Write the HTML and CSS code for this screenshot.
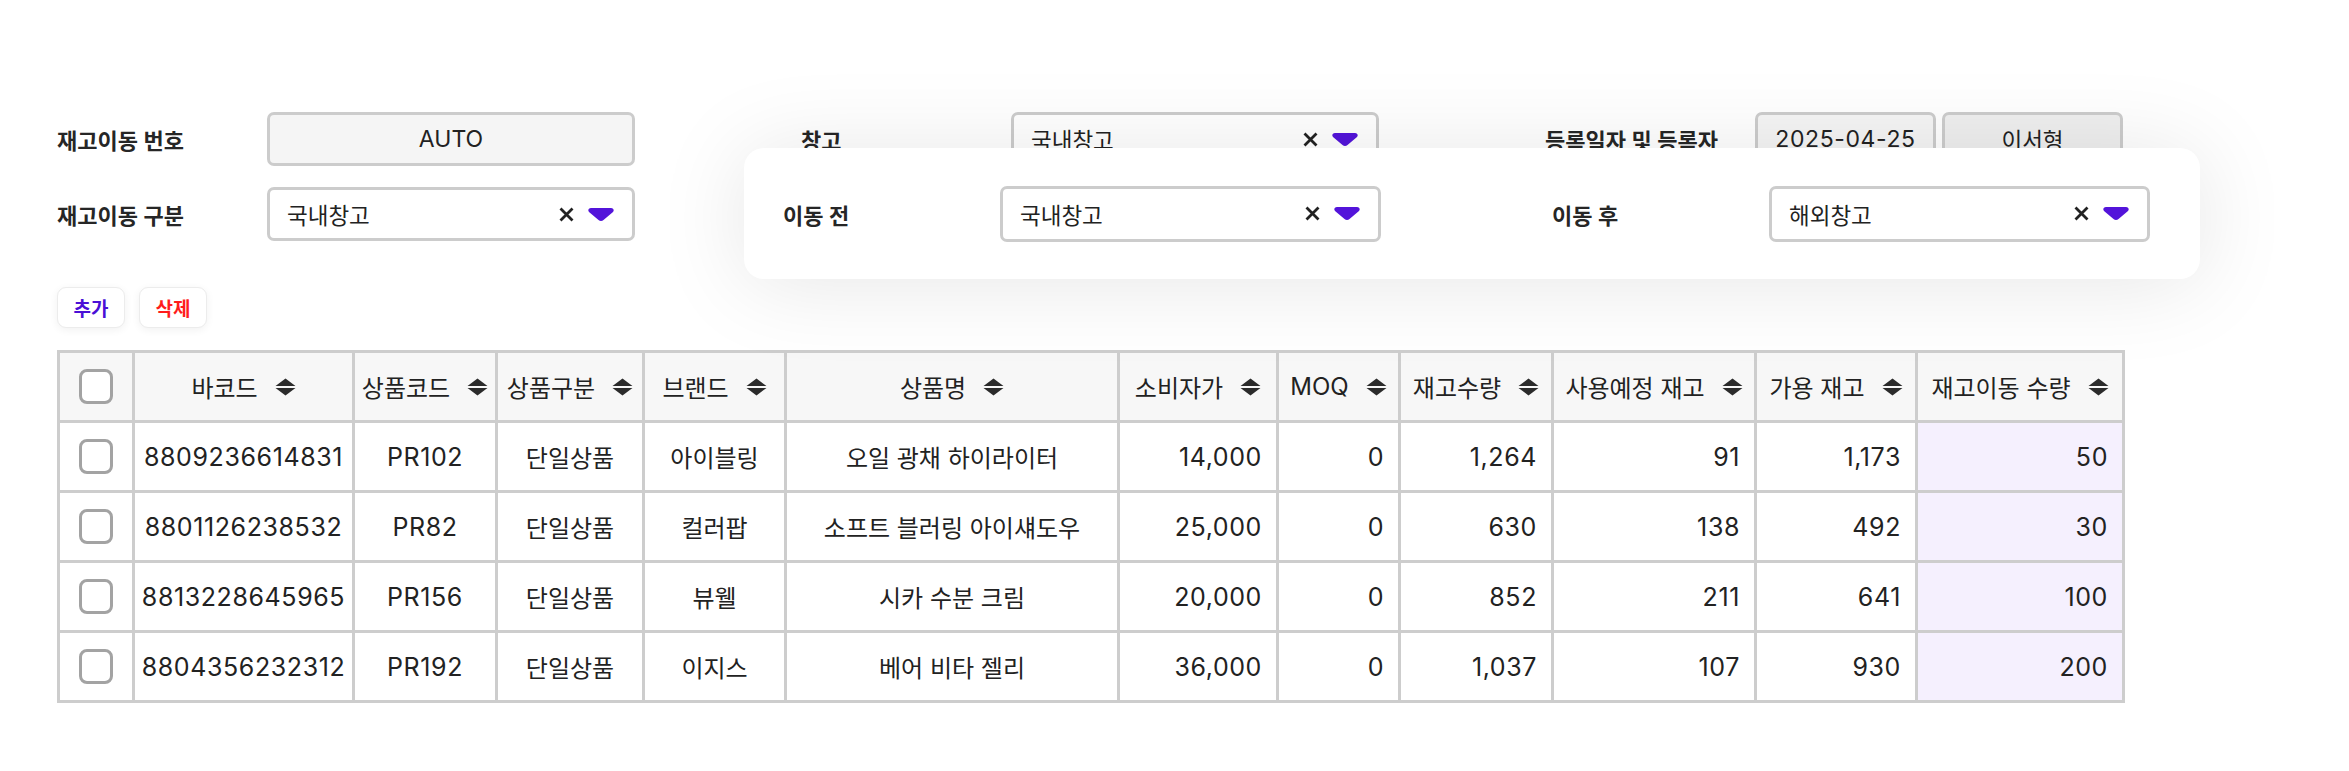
FILE: index.html
```html
<!DOCTYPE html>
<html lang="ko">
<head>
<meta charset="utf-8">
<title>재고이동 등록</title>
<link rel="stylesheet" href="styles.css">
</head>
<body>
<div class="page">
  <section class="form">
    <div class="field">
      <span class="label">재고이동 번호</span>
      <div class="box readonly lat">AUTO</div>
    </div>
    <div class="field">
      <span class="label">창고</span>
      <div class="select">
        <span class="select-value">국내창고</span>
        <svg class="ico-x" viewBox="0 0 15 15"><path d="M1.5 1.5L13.5 13.5M13.5 1.5L1.5 13.5"/></svg>
        <svg class="ico-caret" viewBox="0 0 26 13"><path d="M3 0H23C25.5 0 26.5 2.5 25 4L15.5 12C14 13.3 12 13.3 10.5 12L1 4C-0.5 2.5 0.5 0 3 0Z"/></svg>
      </div>
    </div>
    <div class="field">
      <span class="label">등록일자 및 등록자</span>
      <div class="pair">
        <div class="box readonly lat num">2025-04-25</div>
        <div class="box readonly dim">이서형</div>
      </div>
    </div>
    <div class="field">
      <span class="label">재고이동 구분</span>
      <div class="select">
        <span class="select-value">국내창고</span>
        <svg class="ico-x" viewBox="0 0 15 15"><path d="M1.5 1.5L13.5 13.5M13.5 1.5L1.5 13.5"/></svg>
        <svg class="ico-caret" viewBox="0 0 26 13"><path d="M3 0H23C25.5 0 26.5 2.5 25 4L15.5 12C14 13.3 12 13.3 10.5 12L1 4C-0.5 2.5 0.5 0 3 0Z"/></svg>
      </div>
    </div>
  </section>

  <div class="popover">
    <div class="pfield">
      <span class="label">이동 전</span>
      <div class="select tall">
        <span class="select-value">국내창고</span>
        <svg class="ico-x" viewBox="0 0 15 15"><path d="M1.5 1.5L13.5 13.5M13.5 1.5L1.5 13.5"/></svg>
        <svg class="ico-caret" viewBox="0 0 26 13"><path d="M3 0H23C25.5 0 26.5 2.5 25 4L15.5 12C14 13.3 12 13.3 10.5 12L1 4C-0.5 2.5 0.5 0 3 0Z"/></svg>
      </div>
    </div>
    <div class="pfield">
      <span class="label">이동 후</span>
      <div class="select tall">
        <span class="select-value">해외창고</span>
        <svg class="ico-x" viewBox="0 0 15 15"><path d="M1.5 1.5L13.5 13.5M13.5 1.5L1.5 13.5"/></svg>
        <svg class="ico-caret" viewBox="0 0 26 13"><path d="M3 0H23C25.5 0 26.5 2.5 25 4L15.5 12C14 13.3 12 13.3 10.5 12L1 4C-0.5 2.5 0.5 0 3 0Z"/></svg>
      </div>
    </div>
  </div>

  <div class="actions">
    <button class="btn btn-add">추가</button>
    <button class="btn btn-del">삭제</button>
  </div>

  <table class="grid">
    <colgroup>
      <col style="width:75px"><col style="width:220px"><col style="width:143px"><col style="width:147px">
      <col style="width:142px"><col style="width:333px"><col style="width:159px"><col style="width:122px">
      <col style="width:153px"><col style="width:203px"><col style="width:161px"><col style="width:207px">
    </colgroup>
    <thead>
      <tr>
        <th><span class="chk"></span></th>
        <th><span class="th-in">바코드<svg class="sort" viewBox="0 0 20 17"><path d="M10 0.5L19.5 7.5H0.5Z M0.5 9.5H19.5L10 16.5Z"/></svg></span></th>
        <th><span class="th-in">상품코드<svg class="sort" viewBox="0 0 20 17"><path d="M10 0.5L19.5 7.5H0.5Z M0.5 9.5H19.5L10 16.5Z"/></svg></span></th>
        <th><span class="th-in">상품구분<svg class="sort" viewBox="0 0 20 17"><path d="M10 0.5L19.5 7.5H0.5Z M0.5 9.5H19.5L10 16.5Z"/></svg></span></th>
        <th><span class="th-in">브랜드<svg class="sort" viewBox="0 0 20 17"><path d="M10 0.5L19.5 7.5H0.5Z M0.5 9.5H19.5L10 16.5Z"/></svg></span></th>
        <th><span class="th-in">상품명<svg class="sort" viewBox="0 0 20 17"><path d="M10 0.5L19.5 7.5H0.5Z M0.5 9.5H19.5L10 16.5Z"/></svg></span></th>
        <th><span class="th-in">소비자가<svg class="sort" viewBox="0 0 20 17"><path d="M10 0.5L19.5 7.5H0.5Z M0.5 9.5H19.5L10 16.5Z"/></svg></span></th>
        <th><span class="th-in"><span class="th-lat">MOQ</span><svg class="sort" viewBox="0 0 20 17"><path d="M10 0.5L19.5 7.5H0.5Z M0.5 9.5H19.5L10 16.5Z"/></svg></span></th>
        <th><span class="th-in">재고수량<svg class="sort" viewBox="0 0 20 17"><path d="M10 0.5L19.5 7.5H0.5Z M0.5 9.5H19.5L10 16.5Z"/></svg></span></th>
        <th><span class="th-in">사용예정 재고<svg class="sort" viewBox="0 0 20 17"><path d="M10 0.5L19.5 7.5H0.5Z M0.5 9.5H19.5L10 16.5Z"/></svg></span></th>
        <th><span class="th-in">가용 재고<svg class="sort" viewBox="0 0 20 17"><path d="M10 0.5L19.5 7.5H0.5Z M0.5 9.5H19.5L10 16.5Z"/></svg></span></th>
        <th><span class="th-in">재고이동 수량<svg class="sort" viewBox="0 0 20 17"><path d="M10 0.5L19.5 7.5H0.5Z M0.5 9.5H19.5L10 16.5Z"/></svg></span></th>
      </tr>
    </thead>
    <tbody>
      <tr>
        <td><span class="chk"></span></td>
        <td class="c">8809236614831</td><td class="c">PR102</td><td class="c kr">단일상품</td><td class="c kr">아이블링</td>
        <td class="c kr">오일 광채 하이라이터</td><td class="r">14,000</td><td class="r">0</td><td class="r">1,264</td>
        <td class="r">91</td><td class="r">1,173</td><td class="r qty">50</td>
      </tr>
      <tr>
        <td><span class="chk"></span></td>
        <td class="c">8801126238532</td><td class="c">PR82</td><td class="c kr">단일상품</td><td class="c kr">컬러팝</td>
        <td class="c kr">소프트 블러링 아이섀도우</td><td class="r">25,000</td><td class="r">0</td><td class="r">630</td>
        <td class="r">138</td><td class="r">492</td><td class="r qty">30</td>
      </tr>
      <tr>
        <td><span class="chk"></span></td>
        <td class="c">8813228645965</td><td class="c">PR156</td><td class="c kr">단일상품</td><td class="c kr">뷰웰</td>
        <td class="c kr">시카 수분 크림</td><td class="r">20,000</td><td class="r">0</td><td class="r">852</td>
        <td class="r">211</td><td class="r">641</td><td class="r qty">100</td>
      </tr>
      <tr>
        <td><span class="chk"></span></td>
        <td class="c">8804356232312</td><td class="c">PR192</td><td class="c kr">단일상품</td><td class="c kr">이지스</td>
        <td class="c kr">베어 비타 젤리</td><td class="r">36,000</td><td class="r">0</td><td class="r">1,037</td>
        <td class="r">107</td><td class="r">930</td><td class="r qty">200</td>
      </tr>
    </tbody>
  </table>
</div>
</body>
</html>
```

FILE: styles.css
```css
* { box-sizing: border-box; }

html, body {
  margin: 0;
  padding: 0;
  background: #ffffff;
}

body {
  font-family: "Inter", "Noto Sans CJK KR", sans-serif;
  color: #222222;
}

.page {
  position: relative;
  width: 2349px;
  height: 771px;
  padding: 112px 0 0 57px;
}

/* ---------- top form ---------- */
.form {
  display: grid;
  grid-template-columns: repeat(3, 578px);
  grid-auto-rows: 54px;
  column-gap: 166px;
  row-gap: 21px;
}

.field {
  display: flex;
  align-items: center;
}

.label {
  flex: 0 0 210px;
  font-size: 22px;
  font-weight: 600;
  color: #262626;
  white-space: nowrap;
}

.box {
  flex: 1;
  height: 100%;
  display: flex;
  align-items: center;
  justify-content: center;
  border: 3px solid #cccccc;
  border-radius: 7px;
  font-size: 22.5px;
  color: #222;
}

.box.readonly { background: #f5f5f5; }
.box.dim { background: #efefef; }

.box.lat { font-size: 23px; }
.box.num { letter-spacing: 0.6px; }

.pair {
  flex: 1;
  height: 100%;
  display: flex;
  gap: 6px;
}

.select {
  flex: 1;
  height: 100%;
  display: flex;
  align-items: center;
  background: #ffffff;
  border: 3px solid #cccccc;
  border-radius: 7px;
  padding: 0 18px 0 17px;
  font-size: 22.5px;
}

.select.tall { height: 56px; }

.select-value { flex: 1; }

.ico-x {
  width: 15px;
  height: 15px;
  fill: none;
  stroke: #222222;
  stroke-width: 2.8;
}

.ico-caret {
  width: 26px;
  height: 13px;
  margin-left: 14px;
  fill: #5314da;
}

/* ---------- popover card ---------- */
.popover {
  position: absolute;
  left: 744px;
  top: 148px;
  width: 1456px;
  height: 131px;
  padding: 0 50px 0 39px;
  display: flex;
  align-items: center;
  gap: 171px;
  background: #ffffff;
  border-radius: 20px;
  box-shadow: 0 4px 90px rgba(0, 0, 0, 0.1);
}

.pfield {
  flex: 0 0 598px;
  display: flex;
  align-items: center;
}

.pfield .label { flex-basis: 217px; }

/* ---------- actions ---------- */
.actions {
  display: flex;
  gap: 14px;
  margin-top: 46px;
}

.btn {
  width: 68px;
  height: 41px;
  border: 1px solid #ececec;
  border-radius: 9px;
  background: #ffffff;
  box-shadow: 0 2px 8px rgba(0, 0, 0, 0.06);
  font-family: "Noto Sans CJK KR", sans-serif;
  font-size: 19px;
  font-weight: 700;
  padding: 0;
  cursor: pointer;
}

.btn-add { color: #4a10d6; }
.btn-del { color: #ff1c1c; }

/* ---------- table ---------- */
.grid {
  margin-top: 22px;
  width: 2065px;
  table-layout: fixed;
  border-collapse: collapse;
  border: 3px solid #cdcdcd;
}

.grid th,
.grid td {
  border: 3px solid #cdcdcd;
  height: 70px;
  padding: 0 14px;
  white-space: nowrap;
  overflow: hidden;
}

.grid th,
.grid td:first-child { padding: 0; text-align: center; }

.grid th {
  background: #f7f7f7;
  font-size: 24px;
  font-weight: 400;
  color: #222;
}

.th-lat { font-size: 24px; }

.th-in {
  display: inline-flex;
  align-items: center;
  gap: 17px;
}

.sort {
  width: 21px;
  height: 18px;
  fill: #2b2b2b;
}

.grid td {
  font-size: 25px;
  letter-spacing: 0.6px;
  color: #222;
}

.grid td.kr { font-size: 24px; letter-spacing: 0; }
.grid td.c { text-align: center; padding: 0 2px; }
.grid td.r { text-align: right; }
.grid td.qty { background: #f5f0fe; }

.chk {
  display: inline-block;
  width: 34px;
  height: 35px;
  border: 3px solid #a3a3a3;
  border-radius: 8px;
  background: #ffffff;
  vertical-align: middle;
}
```
